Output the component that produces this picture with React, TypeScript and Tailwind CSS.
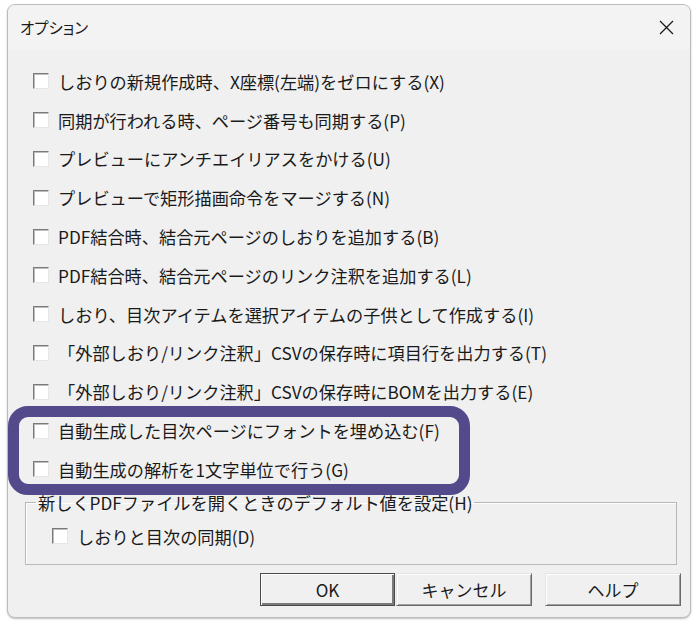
const options = [
  "しおりの新規作成時、X座標(左端)をゼロにする(X)",
  "同期が行われる時、ページ番号も同期する(P)",
  "プレビューにアンチエイリアスをかける(U)",
  "プレビューで矩形描画命令をマージする(N)",
  "PDF結合時、結合元ページのしおりを追加する(B)",
  "PDF結合時、結合元ページのリンク注釈を追加する(L)",
  "しおり、目次アイテムを選択アイテムの子供として作成する(I)",
  "「外部しおり/リンク注釈」CSVの保存時に項目行を出力する(T)",
  "「外部しおり/リンク注釈」CSVの保存時にBOMを出力する(E)",
  "自動生成した目次ページにフォントを埋め込む(F)",
  "自動生成の解析を1文字単位で行う(G)",
];

function CheckBox() {
  return (
    <span className="block h-[16px] w-[16px] shrink-0 border border-t-[#7a7a7a] border-l-[#7a7a7a] border-r-[#e6e6e6] border-b-[#e6e6e6] bg-white shadow-[inset_1px_1px_0_#bdbdbd]" />
  );
}

function Button({ label, isDefault }: { label: string; isDefault?: boolean }) {
  return (
    <button
      className={
        isDefault
          ? "flex h-[33px] w-[135px] items-center justify-center border border-[#4a4a4a] bg-[#f0f0f0] text-[17px] text-[#1a1a1a] shadow-[inset_1px_1px_0_#ffffff,inset_-2px_-2px_0_#7a7a7a]"
          : "flex h-[33px] w-[136px] items-center justify-center border border-t-[#e4e4e4] border-l-[#e4e4e4] border-r-[#6a6a6a] border-b-[#6a6a6a] bg-[#f0f0f0] text-[17px] text-[#1a1a1a] shadow-[inset_1px_1px_0_#ffffff,inset_-1px_-1px_0_#a0a0a0]"
      }
    >
      {label}
    </button>
  );
}

export default function App() {
  return (
    <div className="h-[622px] w-[700px] bg-white pl-[7px] pt-[4px] font-['Noto_Sans_CJK_JP',sans-serif]">
      <div className="relative flex h-[614px] w-[684px] flex-col overflow-hidden rounded-[8px] border border-[#bcbcbc] bg-[#f0f0f0] shadow-[0_1px_2px_rgba(0,0,0,0.25)]">
        <div className="flex h-[45px] shrink-0 items-center justify-between bg-[#f3f3f3] pl-[12px] pr-[16px]">
          <span className="text-[15.5px] text-[#1a1a1a] [font-feature-settings:'palt']">オプション</span>
          <svg width="15" height="15" viewBox="0 0 15 15" className="text-[#1a1a1a]">
            <path d="M1 1 L14 14 M14 1 L1 14" stroke="currentColor" strokeWidth="1.3" fill="none" />
          </svg>
        </div>

        <div className="flex flex-1 flex-col">
          <div className="flex flex-col pt-[12px]">
            {options.map((label) => (
              <div key={label} className="flex h-[38.8px] items-center gap-[9px] pl-[25px]">
                <CheckBox />
                <span className="whitespace-nowrap text-[17.2px] leading-none text-[#1a1a1a]">{label}</span>
              </div>
            ))}
          </div>

          <fieldset className="ml-[17px] mr-[13px] mt-[4px] h-[72px] border border-[#b8b8b8] shadow-[inset_1px_1px_0_#ffffff]">
            <legend className="ml-[10px] px-[2px] text-[17.2px] leading-[20px] text-[#1a1a1a]">
              新しくPDFファイルを開くときのデフォルト値を設定(H)
            </legend>
            <div className="mt-[15px] flex items-center gap-[9px] pl-[26px]">
              <CheckBox />
              <span className="text-[17.2px] leading-none text-[#1a1a1a]">しおりと目次の同期(D)</span>
            </div>
          </fieldset>

          <div className="mt-[8px] flex justify-end pr-[9px]">
            <Button label="OK" isDefault />
            <div className="ml-[1px]">
              <Button label="キャンセル" />
            </div>
            <div className="ml-[13px]">
              <Button label="ヘルプ" />
            </div>
          </div>
        </div>

        <div className="pointer-events-none absolute left-0 top-[401px] h-[89px] w-[462px] rounded-[20px] border-[11px] border-[#534a8b]" />
      </div>
    </div>
  );
}
